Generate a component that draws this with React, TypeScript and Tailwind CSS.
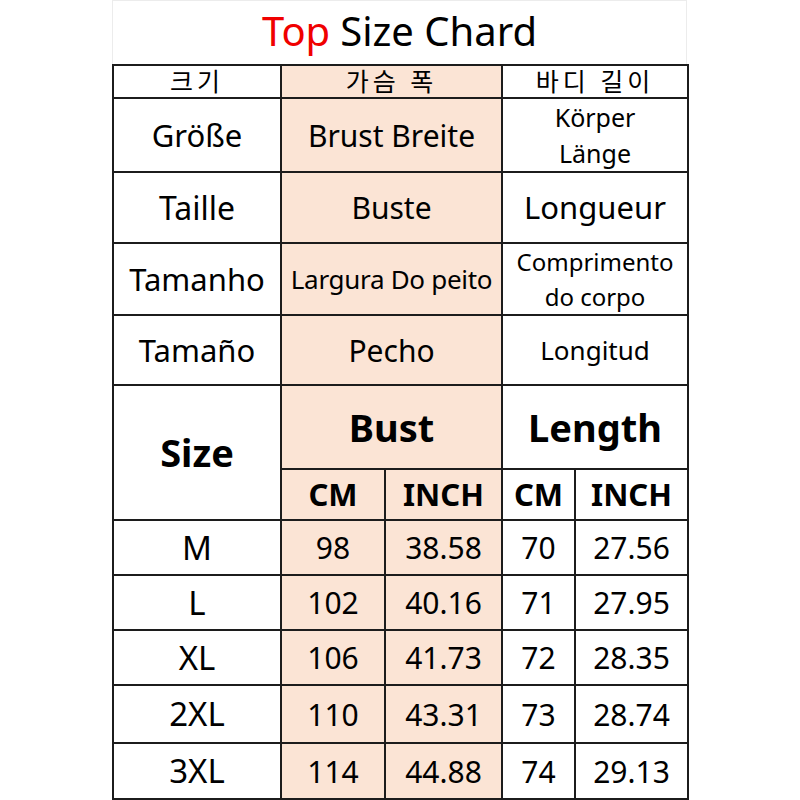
const font = { fontFamily: '"Noto Sans", "Noto Sans CJK KR", sans-serif' };

type Row = { size: string; bc: string; bi: string; lc: string; li: string };

const rows: Row[] = [
  { size: "M", bc: "98", bi: "38.58", lc: "70", li: "27.56" },
  { size: "L", bc: "102", bi: "40.16", lc: "71", li: "27.95" },
  { size: "XL", bc: "106", bi: "41.73", lc: "72", li: "28.35" },
  { size: "2XL", bc: "110", bi: "43.31", lc: "73", li: "28.74" },
  { size: "3XL", bc: "114", bi: "44.88", lc: "74", li: "29.13" },
];

const rowHeights = ["h-[55px]", "h-[55px]", "h-[55px]", "h-[58px]", "h-[56px]"];

const cell = "border-2 border-[#1c1c1c] text-center align-middle p-0";
const peach = "bg-[#fbe4d5]";
const kr = "text-[25px] leading-none tracking-[4px]";

export default function App() {
  return (
    <div className="w-[800px] h-[800px] bg-white text-black" style={font}>
      <div className="ml-[112px] w-[575px]">
        <div className="h-[64px] border border-b-0 border-[#ececec] flex items-center justify-center text-[40px] leading-none pb-1">
          <span className="text-[#f00000]">Top</span>
          <span className="ml-[10px]">Size Chard</span>
        </div>
        <table className="table-fixed border-collapse w-[575px]">
          <colgroup>
            <col className="w-[168px]" />
            <col className="w-[104px]" />
            <col className="w-[117px]" />
            <col className="w-[73px]" />
            <col className="w-[113px]" />
          </colgroup>
          <tbody>
            <tr className="h-[33px]">
              <td className={`${cell} ${kr}`}>크기</td>
              <td colSpan={2} className={`${cell} ${peach} ${kr}`}>가슴 폭</td>
              <td colSpan={2} className={`${cell} ${kr}`}>바디 길이</td>
            </tr>
            <tr className="h-[73px]">
              <td className={`${cell} text-[31px]`}>Größe</td>
              <td colSpan={2} className={`${cell} ${peach} text-[30px]`}>Brust Breite</td>
              <td colSpan={2} className={`${cell} text-[25px] leading-[36px]`}>
                Körper
                <br />
                Länge
              </td>
            </tr>
            <tr className="h-[71px]">
              <td className={`${cell} text-[32px]`}>Taille</td>
              <td colSpan={2} className={`${cell} ${peach} text-[30px]`}>Buste</td>
              <td colSpan={2} className={`${cell} text-[31px]`}>Longueur</td>
            </tr>
            <tr className="h-[71px]">
              <td className={`${cell} text-[31px] whitespace-nowrap`}>Tamanho</td>
              <td colSpan={2} className={`${cell} ${peach} text-[26px] tracking-[-0.3px] whitespace-nowrap`}>Largura Do peito</td>
              <td colSpan={2} className={`${cell} text-[24px] leading-[35px]`}>
                Comprimento
                <br />
                do corpo
              </td>
            </tr>
            <tr className="h-[70px]">
              <td className={`${cell} text-[31px]`}>Tamaño</td>
              <td colSpan={2} className={`${cell} ${peach} text-[30px]`}>Pecho</td>
              <td colSpan={2} className={`${cell} text-[26px]`}>Longitud</td>
            </tr>
            <tr className="h-[84px]">
              <td rowSpan={2} className={`${cell} text-[38px] font-bold`}>Size</td>
              <td colSpan={2} className={`${cell} ${peach} text-[38px] font-bold`}>Bust</td>
              <td colSpan={2} className={`${cell} text-[38px] font-bold`}>Length</td>
            </tr>
            <tr className="h-[51px]">
              <td className={`${cell} ${peach} text-[31px] font-bold`}>CM</td>
              <td className={`${cell} ${peach} text-[31px] font-bold`}>INCH</td>
              <td className={`${cell} text-[31px] font-bold`}>CM</td>
              <td className={`${cell} text-[31px] font-bold`}>INCH</td>
            </tr>
            {rows.map((r, i) => (
              <tr key={r.size} className={rowHeights[i]}>
                <td className={`${cell} text-[33px]`}>{r.size}</td>
                <td className={`${cell} ${peach} text-[30px]`}>{r.bc}</td>
                <td className={`${cell} ${peach} text-[30px]`}>{r.bi}</td>
                <td className={`${cell} text-[30px]`}>{r.lc}</td>
                <td className={`${cell} text-[30px]`}>{r.li}</td>
              </tr>
            ))}
          </tbody>
        </table>
      </div>
    </div>
  );
}
